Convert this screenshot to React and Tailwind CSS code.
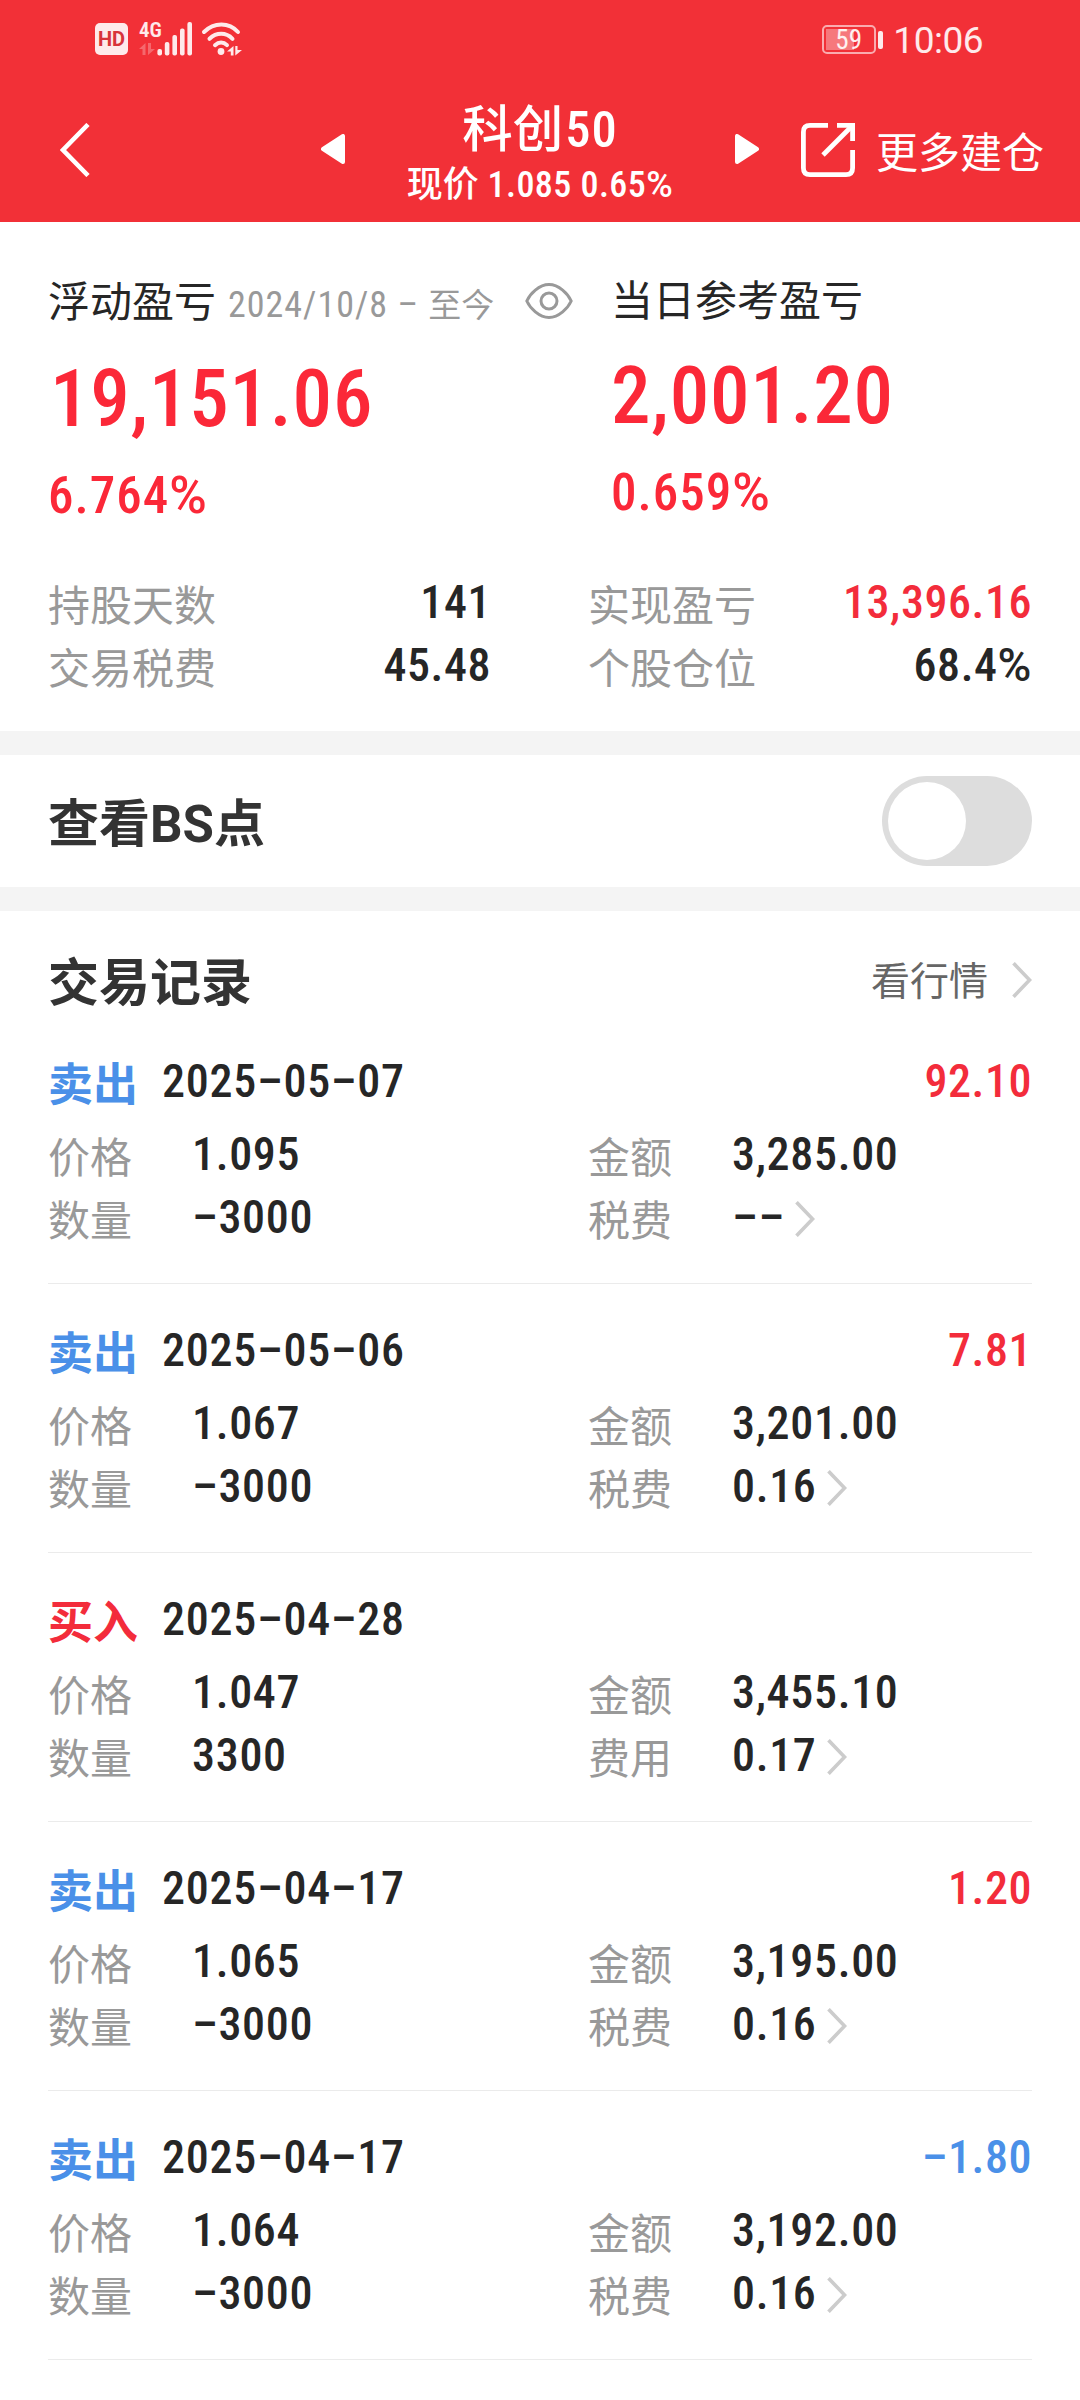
import { useState } from 'react';

const summary = [
  { label: '持股天数', value: '141' },
  { label: '实现盈亏', value: '13,396.16', color: 'text-[#f32c3b]' },
  { label: '交易税费', value: '45.48' },
  { label: '个股仓位', value: '68.4%' },
];

const trades = [
  { id: 1, type: 'sell', date: '2025–05–07', profit: '92.10', price: '1.095', amount: '3,285.00', count: '–3000', fee: '––' },
  { id: 2, type: 'sell', date: '2025–05–06', profit: '7.81', price: '1.067', amount: '3,201.00', count: '–3000', fee: '0.16' },
  { id: 3, type: 'buy', date: '2025–04–28', profit: '', price: '1.047', amount: '3,455.10', count: '3300', fee: '0.17' },
  { id: 4, type: 'sell', date: '2025–04–17', profit: '1.20', price: '1.065', amount: '3,195.00', count: '–3000', fee: '0.16' },
  { id: 5, type: 'sell', date: '2025–04–17', profit: '–1.80', price: '1.064', amount: '3,192.00', count: '–3000', fee: '0.16' },
];

// Narrow digits used for every amount on the page, the percent sign stays wide
const Num = ({ className = 'font-medium tracking-[0.012em]', children }) => {
  const isPercent = children.endsWith('%');

  return (
    <span className={`[font-stretch:87.5%] whitespace-nowrap ${className}`}>
      {isPercent ? children.slice(0, -1) : children}
      {isPercent && <span className="[font-stretch:100%]">%</span>}
    </span>
  );
};

const Chevron = ({ className = '' }) => (
  <svg width="20" height="36" viewBox="0 0 20 36" fill="none" stroke="#cccccc" strokeWidth="3.6" className={className}>
    <path d="M1.5 1.2L17.6 18L1.5 34.8" />
  </svg>
);

const StatusBar = () => (
  <div className="flex h-[72px] items-start pl-[95px] pr-[96px] text-white/90">
    <div className="mt-[23px] flex h-[32px] w-[33px] items-center justify-center rounded-[5px] bg-white/90 text-[20px] font-bold leading-none text-[#d8333a]">
      HD
    </div>
    <div className="ml-[11px] mt-[20px] w-[18px]">
      <div className="text-[21px] font-semibold leading-[20px] [font-stretch:75%]">4G</div>
      <svg width="16" height="12" viewBox="0 0 16 12" fill="currentColor" className="mt-[3px] opacity-30">
        <path d="M0 6L6.5 0V12H3.5V6ZM9 0H12V6H16L9 12Z" />
      </svg>
    </div>
    <svg width="36" height="34" viewBox="0 0 36 34" fill="currentColor" className="mt-[22px]">
      <rect x="0.4" y="27" width="4.6" height="6.4" rx="2" />
      <rect x="7.8" y="20" width="4.6" height="13.4" rx="2" />
      <rect x="15.4" y="13" width="4.6" height="20.4" rx="2" />
      <rect x="23" y="6.5" width="4.6" height="26.9" rx="2" />
      <rect x="30.4" y="0" width="4.6" height="33.4" rx="2" />
    </svg>
    <svg width="42" height="34" viewBox="0 0 42 34" fill="none" stroke="currentColor" strokeWidth="4" strokeLinecap="round" className="ml-[8px] mt-[22px]">
      <path d="M3 10C13 0 28 0 37 10" />
      <path d="M8.5 16.8C15.5 10.2 25 10.2 31.5 16.8" />
      <path d="M14 23.2C17.8 19.6 22.4 19.6 26 23.2" />
      <circle cx="20" cy="29.5" r="3.4" fill="currentColor" stroke="none" />
      <path d="M26 29.5L32.5 24V33.5H29.8V29.5ZM34.3 24H36.5V28H41L34.3 33.5Z" fill="currentColor" stroke="none" />
    </svg>
    <div className="ml-auto mt-[25px] flex items-center">
      <div className="flex h-[29px] w-[54px] items-center rounded-[5px] border-2 border-white/60 p-[2px]">
        <div className="relative h-full w-[28px] bg-white/35">
          <span className="absolute left-[9px] top-0 text-[27px] leading-[22px] [font-stretch:87.5%]">59</span>
        </div>
      </div>
      <div className="ml-[2px] h-[18px] w-[5px] rounded-[2px] bg-white/90" />
    </div>
    <div className="ml-[10px] mr-px mt-[22px] text-[37px] leading-[38px] tracking-[-0.5px]">10:06</div>
  </div>
);

const Header = () => (
  <header className="h-[222px] bg-[#f23037] text-white">
    <StatusBar />
    <div className="flex h-[150px] items-center pl-[60px] pt-[6px]">
      <svg width="30" height="54" viewBox="0 0 30 54" fill="none" stroke="currentColor" strokeWidth="4.6">
        <path d="M28 1.5L3 27L28 52.5" />
      </svg>
      <div className="ml-[231px] flex w-[438px] items-center justify-between">
        <svg width="24" height="30" viewBox="0 0 24 30" fill="currentColor" stroke="currentColor" strokeWidth="4" strokeLinejoin="round" className="mb-[2px]">
          <path d="M22 2V28L2 15Z" />
        </svg>
        <div className="mt-[4px] flex flex-col items-center font-medium">
          <h1 className="text-[50.5px] leading-[56px]">
            科创<Num className="ml-[2px] tracking-[1px]">50</Num>
          </h1>
          <p className="mt-[9px] text-[36px] leading-[36px]">
            现价<Num> 1.085 0.65%</Num>
          </p>
        </div>
        <svg width="24" height="30" viewBox="0 0 24 30" fill="currentColor" stroke="currentColor" strokeWidth="4" strokeLinejoin="round" className="mb-[2px]">
          <path d="M2 2V28L22 15Z" />
        </svg>
      </div>
      <svg width="54" height="54" viewBox="0 0 54 54" fill="none" stroke="currentColor" strokeWidth="4.8" className="ml-[42px]">
        <path d="M27 2.4H9Q2.4 2.4 2.4 9V45Q2.4 51.6 9 51.6H45Q51.6 51.6 51.6 45V27" />
        <path d="M36 2.4H51.6V18" />
        <path d="M22 32L50.5 3.5" />
      </svg>
      <span className="ml-[21px] mt-[8px] text-[42px] leading-[42px]">更多建仓</span>
    </div>
  </header>
);

const Overview = () => (
  <section className="h-[509px] px-[48px] pt-[57px]">
    <div className="flex text-[#fb2838]">
      <div className="flex w-[563px] flex-col">
        <div className="flex h-[48px] items-baseline text-[42px] leading-[48px] text-[#262626]">
          <span>浮动盈亏</span>
          <span className="ml-[12px] text-[33px] leading-[48px] text-[#999999]">
            <Num className="text-[36px] font-normal tracking-[1px]">2024/10/8 – </Num>至今
          </span>
          <svg width="48" height="36" viewBox="0 0 48 36" fill="none" stroke="#999999" strokeWidth="3" className="mb-[4px] ml-auto mr-[38px] self-center">
            <path d="M1.8 18C5 11 14 1.6 24 1.6S43 11 46.2 18C43 25 34 34.4 24 34.4S5 25 1.8 18Z" />
            <circle cx="24" cy="18" r="8" />
          </svg>
        </div>
        <Num className="ml-[2px] mt-[32px] text-[79px] font-medium leading-[80px] tracking-[0.01em]">19,151.06</Num>
        <Num className="mt-[31px] text-[51px] font-medium leading-[52px] tracking-[0.02em]">6.764%</Num>
      </div>
      <div className="-mt-px flex flex-col">
        <span className="text-[42px] leading-[48px] text-[#262626]">当日参考盈亏</span>
        <Num className="mt-[30px] text-[79px] font-medium leading-[80px] tracking-[0.01em]">2,001.20</Num>
        <Num className="mt-[31px] text-[51px] font-medium leading-[52px] tracking-[0.02em]">0.659%</Num>
      </div>
    </div>
    <div className="mt-[49px] grid grid-cols-[443px_444px] gap-x-[97px]">
      {summary.map((item) => (
        <div key={item.label} className="flex h-[63px] items-baseline justify-between leading-[63px]">
          <span className="mt-[4px] self-start text-[42px] text-[#999999]">{item.label}</span>
          <Num className={`text-[46px] font-medium tracking-[0.012em] ${item.color || 'text-[#262626]'}`}>{item.value}</Num>
        </div>
      ))}
    </div>
  </section>
);

const BsSwitch = () => {
  const [on, setOn] = useState(false);

  return (
    <section className="flex h-[132px] items-center justify-between px-[48px]">
      <h2 className="pt-[8px] text-[51px] font-bold leading-[60px] text-[#333333]">查看BS点</h2>
      <button
        role="switch"
        aria-checked={on}
        aria-label="查看BS点"
        onClick={() => setOn(!on)}
        className={`flex h-[90px] w-[150px] items-center rounded-full p-[6px] ${
          on ? 'justify-end bg-[#f23037]' : 'justify-start bg-[#dddddd]'
        }`}
      >
        <span className="size-[78px] rounded-full bg-white" />
      </button>
    </section>
  );
};

const Field = ({ label, value, arrow }) => (
  <div className="flex h-[63px] items-baseline leading-[63px]">
    <span className="mt-[4px] w-[144px] self-start text-[42px] text-[#999999]">{label}</span>
    <Num className="text-[46px] font-medium tracking-[0.015em] text-[#262626]">{value}</Num>
    {arrow && <Chevron className="ml-[10px] mt-[2px] self-center" />}
  </div>
);

const Trade = ({ trade }) => {
  const isSell = trade.type === 'sell';

  return (
    <li className="h-[269px] border-b border-[#ebebeb] pt-[35px]">
      <div className="mb-[10px] flex h-[63px] items-baseline text-[46px] leading-[63px]">
        <span className={`mt-[4px] w-[114px] self-start text-[45px] font-bold ${isSell ? 'text-[#4a90e8]' : 'text-[#f32c3b]'}`}>
          {isSell ? '卖出' : '买入'}
        </span>
        <Num className="font-medium tracking-[0.016em] text-[#262626]">{trade.date}</Num>
        <Num className={`ml-auto font-medium tracking-[0.012em] ${trade.profit.startsWith('–') ? 'text-[#4a90e8]' : 'text-[#f32c3b]'}`}>
          {trade.profit}
        </Num>
      </div>
      <div className="grid grid-cols-[540px_1fr]">
        <Field label="价格" value={trade.price} />
        <Field label="金额" value={trade.amount} />
        <Field label="数量" value={trade.count} />
        <Field label={isSell ? '税费' : '费用'} value={trade.fee} arrow />
      </div>
    </li>
  );
};

export default function App() {
  return (
    <div className="h-[2400px] w-[1080px] overflow-hidden bg-white font-['Roboto','Noto_Sans_CJK_SC',sans-serif]">
      <Header />
      <Overview />
      <div className="h-[24px] bg-[#f4f4f4]" />
      <BsSwitch />
      <div className="h-[24px] bg-[#f4f4f4]" />

      {/* Trade history */}
      <section className="px-[48px]">
        <div className="flex h-[104px] items-center justify-between pt-[34px]">
          <h2 className="pt-[8px] text-[51px] font-bold leading-[60px] text-[#333333]">交易记录</h2>
          <a href="#" className="flex items-center text-[39px] leading-[60px] text-[#666666]">
            <span className="pt-[4px]">看行情</span>
            <Chevron className="ml-[24px]" />
          </a>
        </div>
        <ul>
          {trades.map((trade) => (
            <Trade key={trade.id} trade={trade} />
          ))}
        </ul>
      </section>
    </div>
  );
}
